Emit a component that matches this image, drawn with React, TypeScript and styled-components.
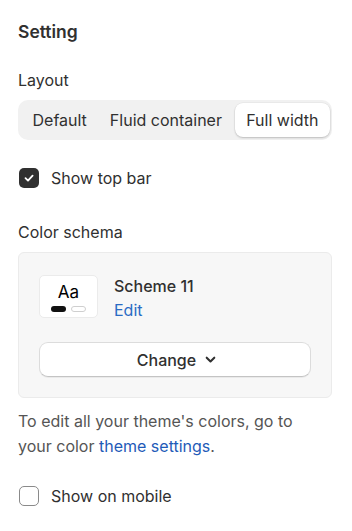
import React, { useState } from "react";
import styled, { createGlobalStyle } from "styled-components";

const Global = createGlobalStyle`
  html, body { margin: 0; padding: 0; background: #ffffff; }
  body { font-family: Inter, "Noto Sans", sans-serif; color: #303030; -webkit-font-smoothing: antialiased; }
  * { box-sizing: border-box; }
`;

const Panel = styled.div`
  width: 352px;
  padding: 20px 20px 0 18px;
  display: flex;
  flex-direction: column;
`;

const Heading = styled.h2`
  margin: 0;
  font-size: 17.5px;
  line-height: 24px;
  font-weight: 600;
  color: #303030;
`;

const Label = styled.div`
  font-size: 16px;
  line-height: 24px;
  color: #303030;
  margin-bottom: 8px;
`;

const Section = styled.div<{ $top: number }>`
  margin-top: ${(p) => p.$top}px;
  display: flex;
  flex-direction: column;
`;

const Segmented = styled.div`
  display: flex;
  align-items: center;
  background: #f1f1f1;
  border-radius: 10px;
  padding: 3px 2px 3px 3px;
  height: 40px;
  width: 314px;
`;

const Segment = styled.button<{ $active?: boolean }>`
  border: none;
  font-family: inherit;
  font-size: 16px;
  color: #303030;
  height: 34px;
  padding: 0 11.5px;
  border-radius: 8px;
  cursor: pointer;
  margin-left: ${(p) => (p.$active ? "auto" : "0")};
  background: ${(p) => (p.$active ? "#ffffff" : "transparent")};
  box-shadow: ${(p) => (p.$active ? "0 1px 2px rgba(0,0,0,0.2), 0 0 0 0.5px rgba(0,0,0,0.05)" : "none")};
`;

const CheckRow = styled.label`
  display: flex;
  align-items: center;
  gap: 12px;
  font-size: 16px;
  line-height: 24px;
  color: #303030;
  cursor: pointer;
`;

const Box = styled.span<{ $checked: boolean }>`
  width: 20px;
  height: 20px;
  border-radius: 5px;
  margin-left: 1px;
  display: flex;
  align-items: center;
  justify-content: center;
  background: ${(p) => (p.$checked ? "#303030" : "#ffffff")};
  border: ${(p) => (p.$checked ? "none" : "1px solid #8a8a8a")};
`;

const Card = styled.div`
  background: #f7f7f7;
  border: 1px solid #ebebeb;
  border-radius: 6px;
  padding: 22px 20px 20px 20px;
  width: 314px;
  display: flex;
  flex-direction: column;
  gap: 24px;
`;

const SchemeRow = styled.div`
  display: flex;
  align-items: flex-start;
  gap: 16px;
  height: 43px;
`;

const Swatch = styled.div`
  width: 59px;
  height: 43px;
  background: #ffffff;
  border: 1px solid #ebebeb;
  border-radius: 5px;
  display: flex;
  flex-direction: column;
  align-items: center;
  padding-top: 5px;
`;

const Aa = styled.div`
  font-size: 17px;
  line-height: 22px;
  color: #000000;
`;

const Pills = styled.div`
  display: flex;
  gap: 5px;
  margin-top: 3px;
`;

const Pill = styled.span<{ $dark?: boolean }>`
  width: 15px;
  height: 6px;
  border-radius: 3px;
  background: ${(p) => (p.$dark ? "#111111" : "#ffffff")};
  border: ${(p) => (p.$dark ? "none" : "1px solid #cfcfcf")};
`;

const SchemeInfo = styled.div`
  display: flex;
  flex-direction: column;
  margin-top: -1px;
`;

const SchemeName = styled.div`
  font-size: 16px;
  line-height: 24px;
  font-weight: 500;
  color: #303030;
`;

const EditLink = styled.a`
  font-size: 16px;
  line-height: 24px;
  color: #2a6bc4;
  text-decoration: none;
  cursor: pointer;
`;

const ChangeButton = styled.button`
  height: 35px;
  width: 272px;
  background: #ffffff;
  border: 1px solid #dcdcdc;
  border-bottom-color: #c4c4c4;
  border-radius: 9px;
  font-family: inherit;
  font-size: 16px;
  font-weight: 500;
  color: #303030;
  display: flex;
  align-items: center;
  justify-content: center;
  gap: 8px;
  padding-left: 10px;
  box-shadow: 0 1px 0 rgba(0, 0, 0, 0.05);
  cursor: pointer;
`;

const Help = styled.p`
  margin: 11px 0 0 0;
  padding-right: 16px;
  font-size: 16px;
  line-height: 25px;
  color: #555555;
`;

const HelpLink = styled.a`
  color: #1f5bb8;
  text-decoration: none;
`;

const Check = () => (
  <svg width="12" height="12" viewBox="0 0 12 12" fill="none">
    <path d="M2.5 6.2 L5 8.6 L9.6 3.6" stroke="#fff" strokeWidth="1.8" strokeLinecap="round" strokeLinejoin="round" />
  </svg>
);

const Chevron = () => (
  <svg width="13" height="13" viewBox="0 0 12 12" fill="none">
    <path d="M2.5 4.3 L6 7.8 L9.5 4.3" stroke="#303030" strokeWidth="1.9" strokeLinecap="round" strokeLinejoin="round" />
  </svg>
);

export default function App() {
  const [layout, setLayout] = useState("full");
  const [topBar, setTopBar] = useState(true);
  const [mobile, setMobile] = useState(false);

  return (
    <>
      <Global />
      <Panel>
        <Heading>Setting</Heading>
        <Section $top={24}>
          <Label>Layout</Label>
          <Segmented>
            <Segment $active={layout === "default"} onClick={() => setLayout("default")}>Default</Segment>
            <Segment $active={layout === "fluid"} onClick={() => setLayout("fluid")}>Fluid container</Segment>
            <Segment $active={layout === "full"} onClick={() => setLayout("full")}>Full width</Segment>
          </Segmented>
        </Section>
        <Section $top={26}>
          <CheckRow onClick={() => setTopBar(!topBar)}>
            <Box $checked={topBar}>{topBar && <Check />}</Box>
            Show top bar
          </CheckRow>
        </Section>
        <Section $top={30}>
          <Label>Color schema</Label>
          <Card>
            <SchemeRow>
              <Swatch>
                <Aa>Aa</Aa>
                <Pills>
                  <Pill $dark />
                  <Pill />
                </Pills>
              </Swatch>
              <SchemeInfo>
                <SchemeName>Scheme 11</SchemeName>
                <EditLink>Edit</EditLink>
              </SchemeInfo>
            </SchemeRow>
            <ChangeButton>
              Change <Chevron />
            </ChangeButton>
          </Card>
        </Section>
        <Help>
          To edit all your theme's colors, go to your color <HelpLink>theme settings</HelpLink>.
        </Help>
        <Section $top={25}>
          <CheckRow onClick={() => setMobile(!mobile)}>
            <Box $checked={mobile}>{mobile && <Check />}</Box>
            Show on mobile
          </CheckRow>
        </Section>
      </Panel>
    </>
  );
}
